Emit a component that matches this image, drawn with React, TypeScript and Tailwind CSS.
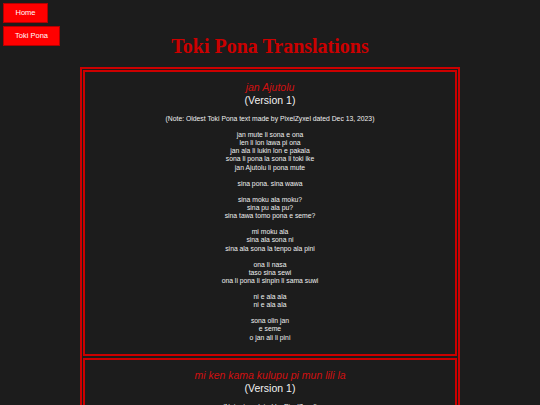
import React from "react";

interface Translation {
  title: string;
  version: string;
  note: string;
  stanzas: string[][];
}

const translations: Translation[] = [
  {
    title: "jan Ajutolu",
    version: "(Version 1)",
    note: "(Note: Oldest Toki Pona text made by PixelZyxel dated Dec 13, 2023)",
    stanzas: [
      [
        "jan mute li sona e ona",
        "len li lon lawa pi ona",
        "jan ala li lukin lon e pakala",
        "sona li pona la sona li toki ike",
        "jan Ajutolu li pona mute",
      ],
      ["sina pona. sina wawa"],
      ["sina moku ala moku?", "sina pu ala pu?", "sina tawa tomo pona e seme?"],
      ["mi moku ala", "sina ala sona ni", "sina ala sona la tenpo ala pini"],
      ["ona li nasa", "taso sina sewi", "ona li pona li sinpin li sama suwi"],
      ["ni e ala ala", "ni e ala ala"],
      ["sona olin jan", "e seme", "o jan ali li pini"],
    ],
  },
  {
    title: "mi ken kama kulupu pi mun lili la",
    version: "(Version 1)",
    note: "(Note: translated by PixelZyxel)",
    stanzas: [["mi ken kama kulupu pi mun lili la", "mi ken lukin e sewi"]],
  },
];

const sans = { fontFamily: '"Liberation Sans", Arial, sans-serif' };

export default function App() {
  return (
    <div className="relative min-h-screen bg-[#1c1c1c] pb-6" style={sans}>
      <nav className="absolute top-[3px] left-[3px] flex flex-col items-start gap-[3px]">
        <a className="h-[20px] w-[45px] flex items-center justify-center bg-[#ff0000] border border-[#b30000] text-white text-[7.5px]">
          Home
        </a>
        <a className="h-[20px] w-[57px] flex items-center justify-center bg-[#ff0000] border border-[#b30000] text-white text-[7.5px]">
          Toki Pona
        </a>
      </nav>

      <h1
        className="pt-[35px] mb-[9px] text-center text-[20px] leading-[23px] font-bold text-[#cc0000]"
        style={{ fontFamily: '"Liberation Serif", "Times New Roman", serif' }}
      >
        Toki Pona Translations
      </h1>

      <div className="mx-auto w-[380px] border-2 border-[#cc0000] p-[1px] flex flex-col gap-[2px]">
        {translations.map((t) => (
          <div key={t.title} className="border-2 border-[#cc0000] pt-[9px] pb-[12px] text-center">
            <div className="text-[10.5px] leading-[13px] italic text-[#d01010]">{t.title}</div>
            <div className="text-[10.5px] leading-[13px] text-[#f2f2f2]">{t.version}</div>
            <div className="mt-[8px] text-[6.8px] leading-[8.1px] text-[#f0f0f0]">{t.note}</div>
            {t.stanzas.map((s, i) => (
              <div key={i} className="mt-[8.1px] text-[6.8px] leading-[8.1px] text-[#f0f0f0]">
                {s.map((line) => (
                  <div key={line}>{line}</div>
                ))}
              </div>
            ))}
          </div>
        ))}
      </div>
    </div>
  );
}
